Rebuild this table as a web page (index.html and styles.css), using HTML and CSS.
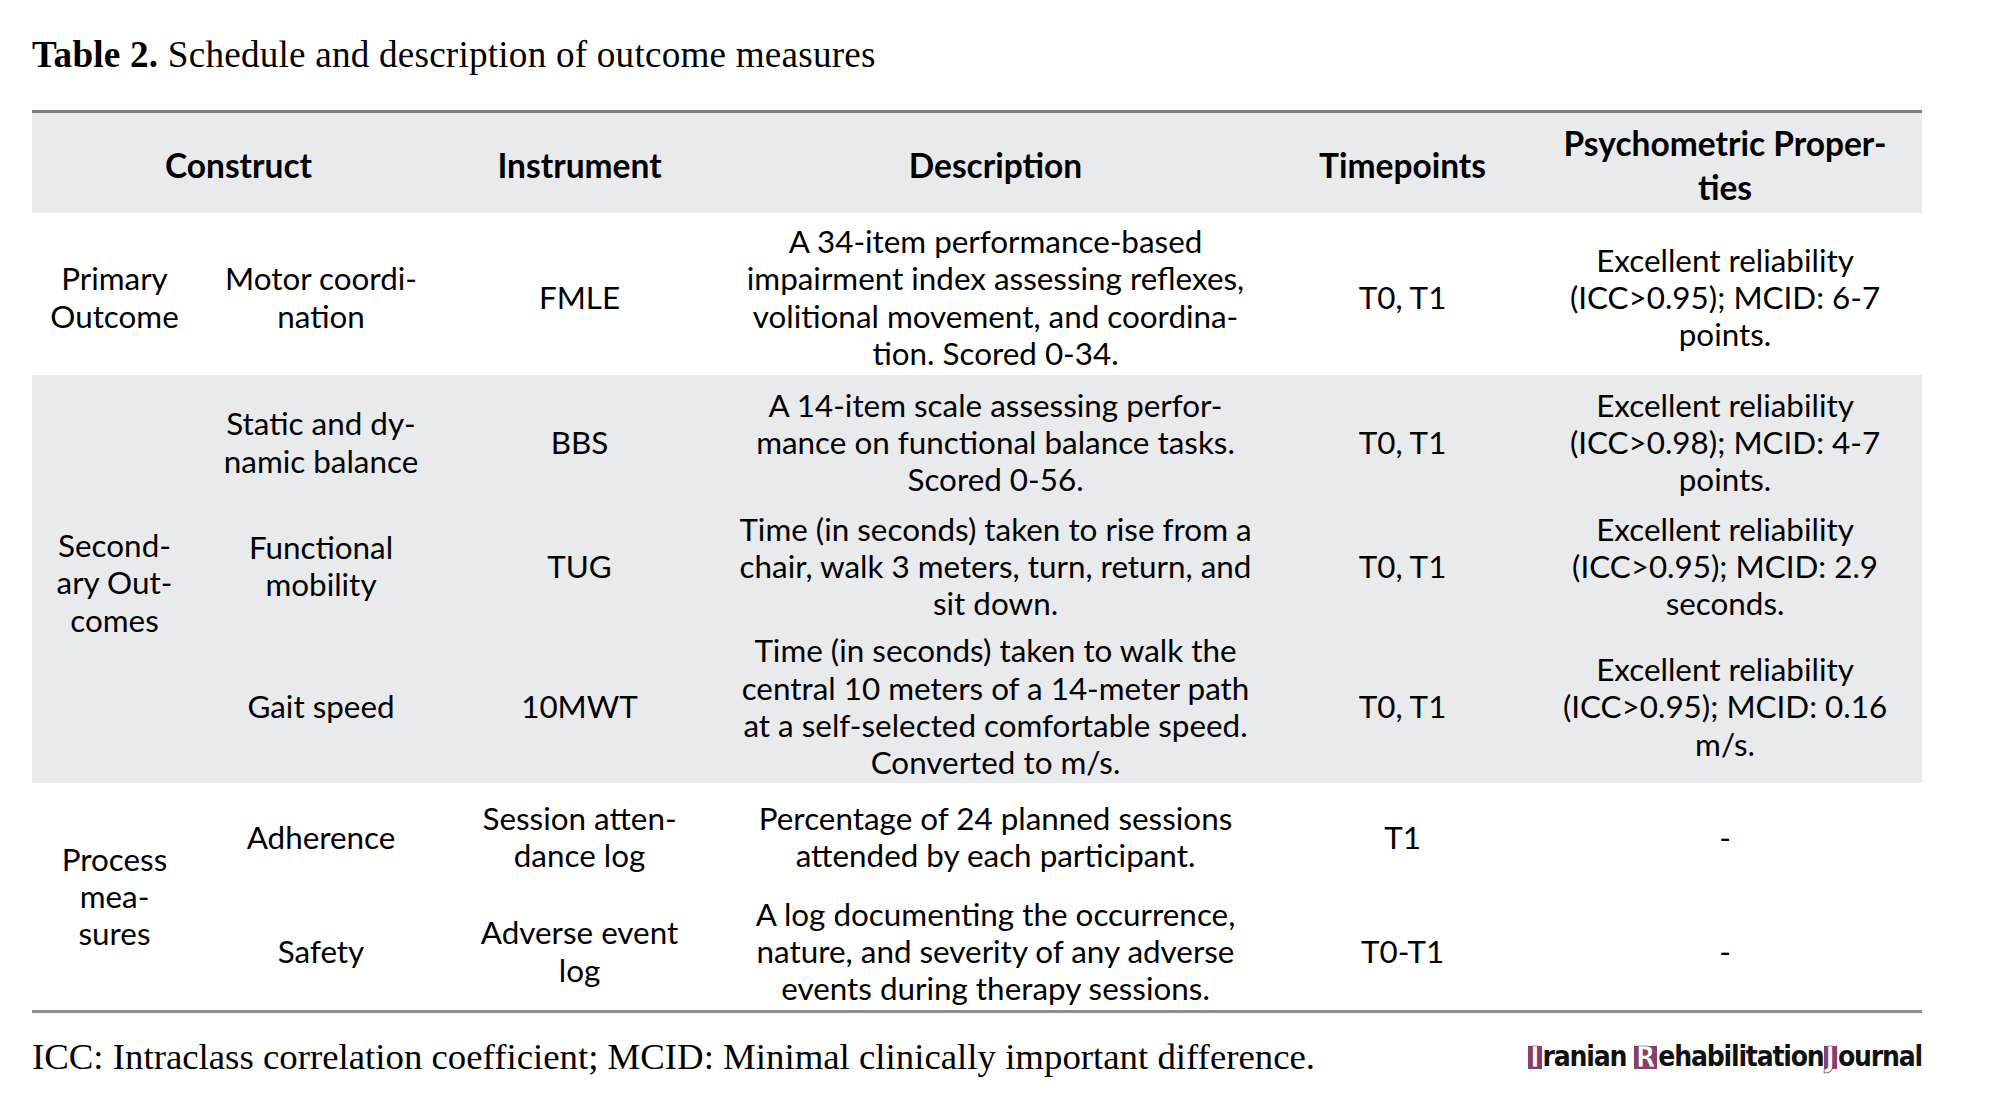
FILE: index.html
```html
<!DOCTYPE html>
<html lang="en">
<head>
<meta charset="utf-8">
<title>Table 2</title>
<link rel="stylesheet" href="styles.css">
</head>
<body>
<div class="page">
  <h1 class="caption"><b>Table 2.</b> Schedule and description of outcome measures</h1>
  <table class="measures">
    <colgroup>
      <col class="c1"><col class="c2"><col class="c3"><col class="c4"><col class="c5"><col class="c6">
    </colgroup>
    <thead>
      <tr class="head">
        <th colspan="2">Construct</th>
        <th>Instrument</th>
        <th>Description</th>
        <th>Timepoints</th>
        <th>Psychometric Proper-<br>ties</th>
      </tr>
    </thead>
    <tbody>
      <tr class="r1">
        <td>Primary<br>Outcome</td>
        <td>Motor coordi-<br>nation</td>
        <td>FMLE</td>
        <td>A 34-item performance-based<br>impairment index assessing reflexes,<br>volitional movement, and coordina-<br>tion. Scored 0-34.</td>
        <td>T0, T1</td>
        <td>Excellent reliability<br>(ICC&gt;0.95); MCID: 6-7<br>points.</td>
      </tr>
      <tr class="r2 shade">
        <td rowspan="3">Second-<br>ary Out-<br>comes</td>
        <td>Static and dy-<br>namic balance</td>
        <td>BBS</td>
        <td>A 14-item scale assessing perfor-<br>mance on functional balance tasks.<br>Scored 0-56.</td>
        <td>T0, T1</td>
        <td>Excellent reliability<br>(ICC&gt;0.98); MCID: 4-7<br>points.</td>
      </tr>
      <tr class="r3 shade">
        <td>Functional<br>mobility</td>
        <td>TUG</td>
        <td>Time (in seconds) taken to rise from a<br>chair, walk 3 meters, turn, return, and<br>sit down.</td>
        <td>T0, T1</td>
        <td>Excellent reliability<br>(ICC&gt;0.95); MCID: 2.9<br>seconds.</td>
      </tr>
      <tr class="r4 shade">
        <td>Gait speed</td>
        <td>10MWT</td>
        <td>Time (in seconds) taken to walk the<br>central 10 meters of a 14-meter path<br>at a self-selected comfortable speed.<br>Converted to m/s.</td>
        <td>T0, T1</td>
        <td>Excellent reliability<br>(ICC&gt;0.95); MCID: 0.16<br>m/s.</td>
      </tr>
      <tr class="r5">
        <td rowspan="2">Process<br>mea-<br>sures</td>
        <td>Adherence</td>
        <td>Session atten-<br>dance log</td>
        <td>Percentage of 24 planned sessions<br>attended by each participant.</td>
        <td>T1</td>
        <td>-</td>
      </tr>
      <tr class="r6">
        <td>Safety</td>
        <td>Adverse event<br>log</td>
        <td>A log documenting the occurrence,<br>nature, and severity of any adverse<br>events during therapy sessions.</td>
        <td>T0-T1</td>
        <td>-</td>
      </tr>
    </tbody>
  </table>
  <div class="foot">
    <p class="note">ICC: Intraclass correlation coefficient; MCID: Minimal clinically important difference.</p>
    <div class="logo"><span class="box">I</span>ranian <span class="box">R</span>ehabilitation<span class="box">J</span>ournal</div>
  </div>
</div>
</body>
</html>
```
FILE: styles.css
```css
html, body {
  margin: 0;
  padding: 0;
  background: #ffffff;
}
.page {
  width: 1890px;
  padding: 0 0 0 32px;
  color: #000;
}
.caption {
  margin: 0;
  height: 110px;
  padding-top: 33px;
  box-sizing: border-box;
  font-family: "Liberation Serif", "Times New Roman", serif;
  font-size: 37.2px;
  font-weight: normal;
  line-height: 44px;
  letter-spacing: 0.2px;
}
.caption b {
  font-weight: bold;
}
.measures {
  width: 1890px;
  border-collapse: collapse;
  table-layout: fixed;
  font-family: Lato, "Open Sans", sans-serif;
  font-size: 31.4px;
  line-height: 37.3px;
  border-top: 3px solid #7d7d7d;
  border-bottom: 3px solid #8c8c8c;
}
.c1 { width: 165px; }
.c2 { width: 248px; }
.c3 { width: 269px; }
.c4 { width: 563px; }
.c5 { width: 251px; }
.c6 { width: 394px; }
.measures th, .measures td {
  padding: 8px 0 0 0;
  text-align: center;
  vertical-align: middle;
  font-weight: normal;
}
.head {
  background: #e9eaec;
  height: 101px;
}
.head th {
  padding-top: 5px;
  font-weight: bold;
  font-size: 33.5px;
  line-height: 44.5px;
}
.shade { background: #e9eaec; }
.r1 { height: 162px; }
.r2 { height: 128px; }
.r3 { height: 118px; }
.r4 { height: 161px; }
.r5 { height: 108px; }
.r6 { height: 120px; }
.measures .r5 td { padding-top: 0; }
.measures .r6 td { padding-top: 2px; }
.foot {
  width: 1890px;
  display: flex;
  justify-content: space-between;
  align-items: center;
  padding-top: 22px;
}
.note {
  margin: 0;
  font-family: "Liberation Serif", "Times New Roman", serif;
  font-size: 36.8px;
  line-height: 44px;
}
.logo {
  font-family: "DejaVu Sans Condensed", "DejaVu Sans", sans-serif;
  font-stretch: condensed;
  font-weight: bold;
  font-size: 28px;
  line-height: 24px;
  letter-spacing: -1.2px;
  color: #111;
  display: flex;
  align-items: flex-end;
  white-space: pre;
}
.box {
  display: inline-block;
  background: #8e3c6b;
  color: #fff;
  padding: 0 2px;
  margin-right: 1px;
  line-height: 23px;
  height: 23px;
  letter-spacing: 0;
  -webkit-text-stroke: 0.6px #5a2040;
}
```
